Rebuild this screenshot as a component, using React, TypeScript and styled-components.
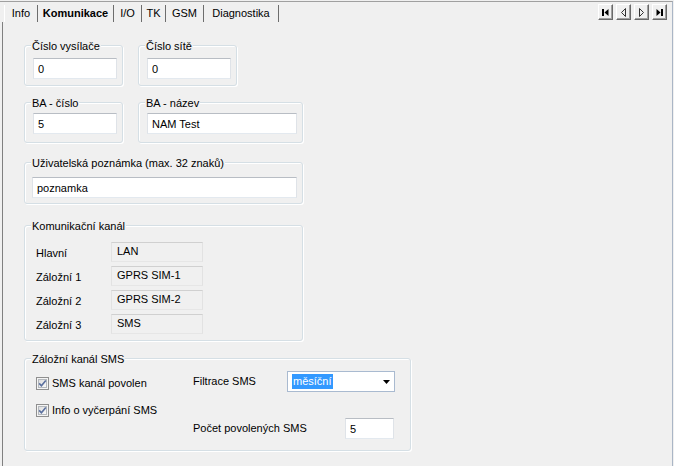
import { Fragment } from "react";
import styled, { createGlobalStyle } from "styled-components";

const GlobalStyle = createGlobalStyle`
  html, body {
    margin: 0;
    padding: 0;
    background: #f0f0f0;
  }
  body {
    font-family: "Liberation Sans", Arial, sans-serif;
    font-size: 11px;
    color: #000;
  }
  * {
    box-sizing: border-box;
  }
`;

const Window = styled.div`
  width: 674px;
  height: 466px;
  padding-top: 1px;
  background: #f0f0f0;
  overflow: hidden;
`;

const Frame = styled.div`
  width: 673px;
  height: 465px;
  border-top: 1px solid #a0a0a0;
  border-right: 1px solid #aab6c6;
  display: flex;
  flex-direction: column;
`;

const TabStrip = styled.div`
  height: 20px;
  display: flex;
  align-items: flex-start;
  padding: 0 5px 0 4px;
`;

const Tab = styled.div<{ $w: number; $active?: boolean; $first?: boolean }>`
  width: ${(p) => p.$w}px;
  height: 17px;
  margin-top: 3px;
  padding-top: 2px;
  line-height: 13px;
  text-align: center;
  white-space: nowrap;
  font-weight: ${(p) => (p.$active ? "bold" : "normal")};
  border-left: ${(p) => (p.$first ? "1px solid #ffffff" : "none")};
  border-right: 1px solid #6d6d6d;
`;

const NavGroup = styled.div`
  margin-left: auto;
  margin-top: 2px;
  display: flex;
  gap: 3px;
`;

const NavButton = styled.button`
  width: 15px;
  height: 16px;
  padding: 0;
  background: #f0f0f0;
  border: 1px solid;
  border-color: #ffffff #696969 #696969 #ffffff;
  box-shadow: inset -1px -1px 0 #a0a0a0;
  display: flex;
  align-items: center;
  justify-content: center;
`;

const Panel = styled.div`
  flex: 1;
  margin-left: 2px;
  border-left: 1px solid #808080;
  padding: 23px 0 0 21px;
  display: flex;
  flex-direction: column;
  align-items: flex-start;
`;

const Row = styled.div<{ $mt?: number }>`
  display: flex;
  gap: 15px;
  margin-top: ${(p) => p.$mt ?? 0}px;
`;

const Group = styled.div<{ $w: number; $pt: number; $pb: number; $pl?: number; $mt?: number }>`
  position: relative;
  width: ${(p) => p.$w}px;
  margin-top: ${(p) => p.$mt ?? 0}px;
  padding: ${(p) => `${p.$pt}px 0 ${p.$pb}px ${p.$pl ?? 8}px`};
  border: 1px solid #d5dfe5;
  border-radius: 3px;
  box-shadow: inset 1px 1px 0 #ffffff, 1px 1px 0 #ffffff;
`;

const Caption = styled.span`
  position: absolute;
  top: -6px;
  left: 6px;
  padding: 0 1px;
  line-height: 13px;
  white-space: nowrap;
  background: #f0f0f0;
`;

const TextBox = styled.input<{ $w: number }>`
  display: block;
  width: ${(p) => p.$w}px;
  height: 21px;
  margin: 0;
  padding: 0 4px;
  font: inherit;
  color: #000;
  background: #ffffff;
  border: 1px solid;
  border-color: #b8bdc4 #dfe3e8 #e3e9ef #dfe3e8;
  outline: none;
`;

const ChannelGrid = styled.div`
  display: grid;
  grid-template-columns: 75px 92px;
  row-gap: 4px;
  align-items: center;
`;

const ChannelLabel = styled.span`
  line-height: 13px;
  padding-top: 2px;
`;

const ReadOnlyField = styled.div`
  height: 20px;
  padding: 0 0 2px 5px;
  line-height: 17px;
  background: #f0f0f0;
  border: 1px solid;
  border-color: #d0d0d0 #e2e2e2 #e6e6e6 #e2e2e2;
  white-space: nowrap;
`;

const SmsBody = styled.div`
  height: 91px;
  display: flex;
`;

const CheckColumn = styled.div`
  width: 157px;
  padding-top: 18px;
  display: flex;
  flex-direction: column;
  gap: 14px;
`;

const CheckRow = styled.label`
  display: flex;
  align-items: center;
  gap: 3px;
  height: 13px;
  line-height: 13px;
  white-space: nowrap;
`;

const OptionGrid = styled.div`
  padding-top: 12px;
  display: grid;
  grid-template-columns: 94px 108px;
  grid-auto-rows: min-content;
  row-gap: 26px;
  align-items: center;
`;

const OptionLabel = styled.span`
  line-height: 13px;
  white-space: nowrap;
`;

const Combo = styled.div`
  width: 108px;
  height: 21px;
  display: flex;
  align-items: center;
  padding: 0 4px;
  background: #ffffff;
  border: 1px solid #a9bad0;
`;

const Selected = styled.span`
  padding: 0 1px;
  line-height: 15px;
  background: #3399ff;
  color: #ffffff;
`;

const ComboArrow = styled.svg`
  margin-left: auto;
`;

const CountBox = styled(TextBox)`
  justify-self: end;
  margin-right: 1px;
`;

function CheckBox() {
  return (
    <svg width="13" height="13" viewBox="0 0 13 13">
      <defs>
        <linearGradient id="cbfill" x1="0" y1="0" x2="1" y2="1">
          <stop offset="0" stopColor="#dcdcdc" />
          <stop offset="1" stopColor="#fbfbfb" />
        </linearGradient>
      </defs>
      <rect x="0.5" y="0.5" width="12" height="12" fill="#f4f4f4" stroke="#8f8f8f" />
      <rect x="2.5" y="2.5" width="8" height="8" fill="url(#cbfill)" stroke="#b4b8bd" />
      <path d="M3.2 6.4 L5.4 8.8 L9.8 3.4" fill="none" stroke="#5a6f9e" strokeWidth="1.6" />
    </svg>
  );
}

function NavIcon({ kind }: { kind: "first" | "prev" | "next" | "last" }) {
  return (
    <svg width="9" height="9" viewBox="0 0 9 9">
      {kind === "first" && (
        <>
          <rect x="1" y="1" width="2" height="7" fill="#000" />
          <polygon points="7.5,1 7.5,8 3.5,4.5" fill="#000" />
        </>
      )}
      {kind === "prev" && <polygon points="6.5,0.5 6.5,8.5 2.5,4.5" fill="none" stroke="#333" />}
      {kind === "next" && <polygon points="2.5,0.5 2.5,8.5 6.5,4.5" fill="none" stroke="#333" />}
      {kind === "last" && (
        <>
          <polygon points="1.5,1 1.5,8 5.5,4.5" fill="#000" />
          <rect x="6" y="1" width="2" height="7" fill="#000" />
        </>
      )}
    </svg>
  );
}

const tabs = [
  { name: "Info", w: 34 },
  { name: "Komunikace", w: 76 },
  { name: "I/O", w: 28 },
  { name: "TK", w: 24 },
  { name: "GSM", w: 38 },
  { name: "Diagnostika", w: 75 },
];

const channels = [
  { label: "Hlavní", value: "LAN" },
  { label: "Záložní 1", value: "GPRS SIM-1" },
  { label: "Záložní 2", value: "GPRS SIM-2" },
  { label: "Záložní 3", value: "SMS" },
];

export default function App() {
  return (
    <Window>
      <GlobalStyle />
      <Frame>
        <TabStrip>
          {tabs.map((t, i) => (
            <Tab key={t.name} $w={t.w} $first={i === 0} $active={t.name === "Komunikace"}>
              {t.name}
            </Tab>
          ))}
          <NavGroup>
            <NavButton>
              <NavIcon kind="first" />
            </NavButton>
            <NavButton>
              <NavIcon kind="prev" />
            </NavButton>
            <NavButton>
              <NavIcon kind="next" />
            </NavButton>
            <NavButton>
              <NavIcon kind="last" />
            </NavButton>
          </NavGroup>
        </TabStrip>

        <Panel>
          <Row>
            <Group $w={99} $pt={12} $pb={6}>
              <Caption>Číslo vysílače</Caption>
              <TextBox $w={84} defaultValue="0" />
            </Group>
            <Group $w={99} $pt={12} $pb={6}>
              <Caption>Číslo sítě</Caption>
              <TextBox $w={84} defaultValue="0" />
            </Group>
          </Row>

          <Row $mt={16}>
            <Group $w={99} $pt={10} $pb={8}>
              <Caption>BA - číslo</Caption>
              <TextBox $w={84} defaultValue="5" />
            </Group>
            <Group $w={165} $pt={10} $pb={8}>
              <Caption>BA - název</Caption>
              <TextBox $w={150} defaultValue="NAM Test" />
            </Group>
          </Row>

          <Group $w={279} $pt={14} $pb={5} $pl={7} $mt={19}>
            <Caption>Uživatelská poznámka (max. 32 znaků)</Caption>
            <TextBox $w={265} defaultValue="poznamka" />
          </Group>

          <Group $w={279} $pt={16} $pb={6} $pl={11} $mt={21}>
            <Caption>Komunikační kanál</Caption>
            <ChannelGrid>
              {channels.map((c) => (
                <Fragment key={c.label}>
                  <ChannelLabel>{c.label}</ChannelLabel>
                  <ReadOnlyField>{c.value}</ReadOnlyField>
                </Fragment>
              ))}
            </ChannelGrid>
          </Group>

          <Group $w={387} $pt={0} $pb={0} $pl={11} $mt={17}>
            <Caption>Záložní kanál SMS</Caption>
            <SmsBody>
              <CheckColumn>
                <CheckRow>
                  <CheckBox />
                  SMS kanál povolen
                </CheckRow>
                <CheckRow>
                  <CheckBox />
                  Info o vyčerpání SMS
                </CheckRow>
              </CheckColumn>
              <OptionGrid>
                <OptionLabel>Filtrace SMS</OptionLabel>
                <Combo>
                  <Selected>měsíční</Selected>
                  <ComboArrow width="7" height="4" viewBox="0 0 7 4">
                    <polygon points="0,0 7,0 3.5,4" fill="#000" />
                  </ComboArrow>
                </Combo>
                <OptionLabel>Počet povolených SMS</OptionLabel>
                <CountBox $w={49} defaultValue="5" />
              </OptionGrid>
            </SmsBody>
          </Group>
        </Panel>
      </Frame>
    </Window>
  );
}
